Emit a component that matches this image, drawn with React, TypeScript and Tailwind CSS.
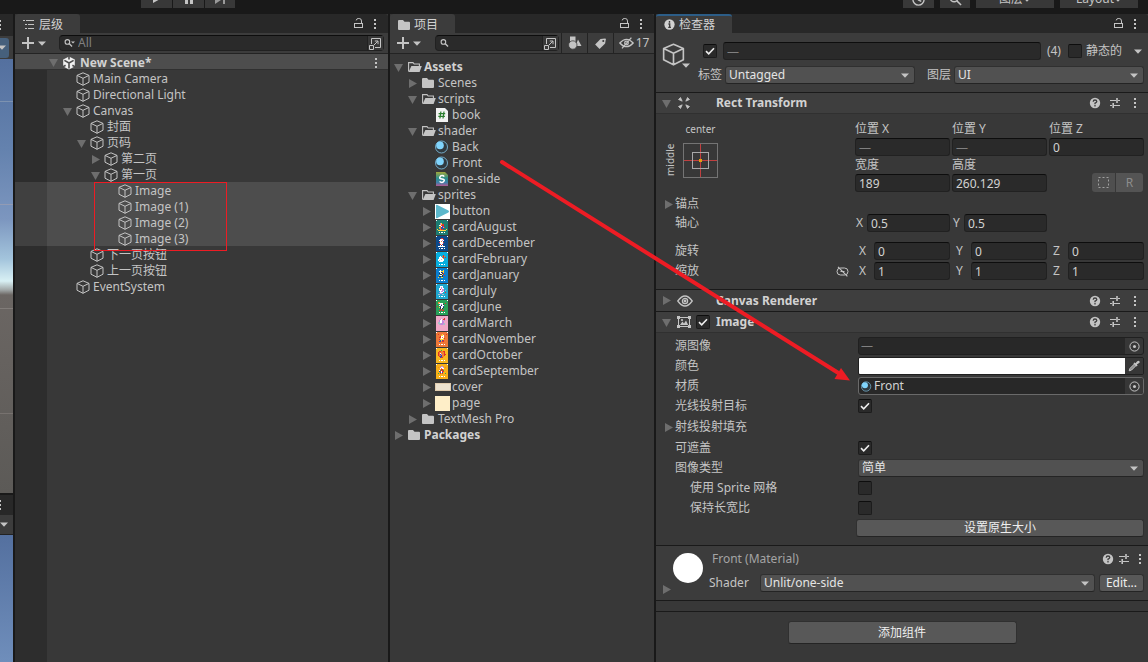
import React from 'react';
import { clsx } from 'clsx';

type IconProps = { className?: string };

const FIELD =
  'h-[18px] w-full min-w-0 rounded-[3px] border border-[#212121] border-t-[#0d0d0d] bg-[#2a2a2a] px-[3px] text-[#d2d2d2] outline-none placeholder:text-[#808080]';
const BUTTON =
  'flex items-center justify-center rounded-[3px] border border-[#303030] border-b-[#242424] bg-[#585858] text-[#eeeeee]';

/* ---------- icons ---------- */

const CubeIcon = ({ className = 'size-[14px]' }: IconProps) => (
  <svg viewBox="0 0 14 14" className={clsx('shrink-0', className)} fill="none" stroke="#c4c4c4" strokeLinejoin="round">
    <path d="M7 .8 13 3.4V10.2L7 13.3 1 10.2V3.4Z M1 3.4 7 6.3 13 3.4 M7 6.3V13.3" />
  </svg>
);

const UnityIcon = () => (
  <svg viewBox="0 0 14 14" className="size-[14px] shrink-0">
    <path d="M7 .5 12.8 3.6V10.4L7 13.6 1.2 10.4V3.6Z" fill="#f0f0f0" />
    <path d="M7 7V12.4M7 7 2.4 4.4M7 7 11.6 4.4M7 0V3.4M0 11.4 3.6 9.2M14 11.4 10.4 9.2" stroke="#4d4d4d" strokeWidth="1.6" fill="none" />
  </svg>
);

const Foldout = ({ open }: { open?: boolean }) => (
  <svg viewBox="0 0 9 9" className="size-[9px] shrink-0" fill="#6e6e6e">
    {open ? <path d="M0 1H9L4.5 9Z" /> : <path d="M1 0V9L9 4.5Z" />}
  </svg>
);

const Caret = ({ className }: IconProps) => (
  <svg viewBox="0 0 8 5" className={clsx('h-[5px] w-[8px] shrink-0', className)} fill="#c4c4c4">
    <path d="M0 .5H8L4 4.8Z" />
  </svg>
);

const LockIcon = () => (
  <svg viewBox="0 0 10 12" className="h-[12px] w-[10px]" fill="none" stroke="#c4c4c4">
    <rect x="1.5" y="5.5" width="8" height="4" />
    <path d="M8.5 5.5V3Q8.5 .5 6.2 .5H5.2Q3.6 .5 3.2 2.4" />
  </svg>
);

const DotsIcon = () => (
  <svg viewBox="0 0 4 12" className="h-[12px] w-[4px] shrink-0" fill="#c4c4c4">
    <path d="M1 1h2v2H1zM1 5h2v2H1zM1 9h2v2H1z" />
  </svg>
);

const HelpIcon = () => (
  <svg viewBox="0 0 12 12" className="size-[12px]">
    <circle cx="6" cy="6" r="5.2" fill="#c4c4c4" />
    <path d="M4.2 4.7Q4.3 3 6 3T7.8 4.6Q7.8 5.5 6 6.2V7.2M6 8V9.4" stroke="#3e3e3e" strokeWidth="1.3" fill="none" />
  </svg>
);

const PresetIcon = () => (
  <svg viewBox="0 0 12 12" className="size-[12px]" stroke="#c4c4c4" fill="none">
    <path d="M1 3.5H7M9 3.5H11M1 8.5H3M5 8.5H11" strokeWidth="1.2" />
    <path d="M8 1V6M4.2 6V11" strokeWidth="1.6" />
  </svg>
);

const SearchIcon = ({ caret }: { caret?: boolean }) => (
  <svg viewBox="0 0 12 10" className="h-[10px] w-[12px] shrink-0" fill="none" stroke="#c4c4c4">
    <circle cx="3.4" cy="3.9" r="2.3" strokeWidth="1.1" />
    <path d="M5.1 5.6 8 8.4" strokeWidth="1.4" />
    {caret && <path d="M7 3.4H11L9 5.6Z" fill="#c4c4c4" stroke="none" />}
  </svg>
);

const PopoutIcon = () => (
  <svg viewBox="0 0 13 13" className="size-[13px]" fill="none" stroke="#c4c4c4">
    <path d="M2.5 7V1.5H11.5V10.5H6M.5 8.5H4.5V12.5H.5ZM5 8 8.8 4.2M5.8 4H9V7.2" />
  </svg>
);

const PlusIcon = () => (
  <svg viewBox="0 0 12 12" className="size-[12px]" stroke="#c4c4c4" strokeWidth="2">
    <path d="M6 0V12M0 6H12" />
  </svg>
);

const FolderIcon = ({ open }: { open?: boolean }) => (
  <svg viewBox="0 0 14 12" className="h-[12px] w-[14px] shrink-0">
    {open ? (
      <>
        <path d="M.6 10.5V1.6H5L6.2 3H11.4V5" fill="none" stroke="#c4c4c4" strokeWidth="1.1" />
        <path d="M3.4 5H13.8L11.6 11H.6Z" fill="#c4c4c4" />
      </>
    ) : (
      <path d="M0 2Q0 1 1 1H5L6.5 2.8H11Q12 2.8 12 3.8V10Q12 11 11 11H1Q0 11 0 10Z" fill="#c4c4c4" />
    )}
  </svg>
);

const MaterialIcon = ({ className = 'size-[14px]' }: IconProps) => (
  <svg viewBox="0 0 14 14" className={clsx('shrink-0', className)}>
    <circle cx="6.5" cy="7" r="6" fill="#303a40" stroke="#7ab8d8" strokeWidth=".9" />
    <circle cx="5" cy="5.4" r="3.8" fill="#80d4fc" />
  </svg>
);

const ScriptIcon = () => (
  <svg viewBox="0 0 14 14" className="size-[14px] shrink-0">
    <path d="M1 0H10L13 3V14H1Z" fill="#f2f2f2" />
    <path d="M5.9 3.5 4.9 10.5M9 3.5 8 10.5M3.6 5.6H10.2M3.3 8.4H9.9" stroke="#2a7d2e" strokeWidth="1.2" />
  </svg>
);

const ShaderIcon = () => (
  <svg viewBox="0 0 14 14" className="size-[14px] shrink-0">
    <defs>
      <linearGradient id="shader-fill" x1="0" y1="0" x2="0" y2="1">
        <stop offset="0" stopColor="#a3a83c" />
        <stop offset=".45" stopColor="#2a8f8c" />
        <stop offset=".75" stopColor="#3f7fa8" />
        <stop offset="1" stopColor="#b3588f" />
      </linearGradient>
    </defs>
    <path d="M1 0H10L13 3V14H1Z" fill="url(#shader-fill)" />
    <path d="M9.2 4.6Q8.6 3.6 7 3.6T4.8 5.2 7 7 9.2 8.8 7 10.4 4.6 9.4" stroke="#fff" strokeWidth="1.5" fill="none" />
  </svg>
);

const PALETTE: Record<string, string> = {
  w: '#ffffff', r: '#e0302a', y: '#ffd23c', b: '#2a4fb8', p: '#c488dc', o: '#f08030', g: '#34a853', k: '#26324a', s: '#a8c0c8',
};

const CARDS: Record<string, { bg: string; art: string[] }> = {
  August: { bg: '#1d7d72', art: ['w..........w', '............', '............', '....py......', '....pyrr....', '...wwrrr....', '....owbr....', '...yobbpr...', '...oobb.....', '.y..orr...y.', '..yyyyyyyy..', '............', '...w.ww.w...'] },
  December: { bg: '#0c4a8c', art: ['w..........w', '............', '.....rr.....', '....wwwr....', '...wwwpw....', '....wow.....', '...rwwwr....', '...bwwwb....', '....rwr.....', '....w.w.....', '..wwwwwww...', '............', '...w.ww.w...'] },
  February: { bg: '#08b0e0', art: ['w..........w', '............', '............', '.......r....', '....w.oro...', '...www.r.r..', '...wwwwo....', '..wwwsww....', '..wswwww....', '...wwww.....', '............', '............', '...w.ww.w...'] },
  January: { bg: '#0a7fd0', art: ['w..........w', '............', '....w..y....', '...wwyyy....', '....wkby....', '...kwwkr....', '....kkyb....', '...ywwk.r...', '...kk.k.....', '..y..yy.....', '............', '............', '...w.ww.w...'] },
  July: { bg: '#20a8d0', art: ['w..........w', '............', '....www.....', '....wpw.....', '...wwpww....', '...wrwpp....', '...wwwpp.s..', '....wppw....', '...pwww..r..', '....pp......', '..ss..ss....', '............', '...w.ww.w...'] },
  June: { bg: '#28a058', art: ['w..........w', '............', '..oo........', '..owwww..r..', '....wpwk....', '...wwkww....', '.r..bwwb....', '...ykwwk....', '....kwk.....', '....r.r.....', '...rr.rr....', '............', '...w.ww.w...'] },
  March: { bg: '#f0a8c8', art: ['............', '............', '........r...', '....pw.rr...', '...pwwp.p...', '...pwwpp....', '..sswwpp....', '..sssppps...', '...spppss...', '............', '............', '............', '............'] },
  November: { bg: '#ee7838', art: ['w..........w', '............', '..r...y...r.', '.....yyw....', '....rwww....', '...rrwow....', '....ywwyr...', '...ryyyy....', '....bybr....', '...bb.rr....', '............', '............', '...w.ww.w...'] },
  October: { bg: '#f8b820', art: ['w..........w', '............', '.....g......', '...rroorr...', '..rooooor...', '..rowooor...', '..robpoorr..', '..rooboor...', '...rbboo....', '....brr.....', '............', '............', '...w.ww.w...'] },
  September: { bg: '#f8b018', art: ['w..........w', '............', '.....pp.....', '..o.pwwp.o..', '....woww....', '.....rr.....', '...wgrrg....', '...brwrr....', '....bwb.....', '..g.r.r..g..', '............', '............', '...w.ww.w...'] },
};

const CardIcon = ({ month }: { month: string }) => {
  const { bg, art } = CARDS[month];
  return (
    <svg viewBox="0 0 12 15" className="ml-px h-[15px] w-[12px] shrink-0" shapeRendering="crispEdges">
      <rect width="12" height="15" fill={bg} />
      {art.flatMap((line, y) =>
        line.split('').map((c, x) => c !== '.' && <rect key={`${x}-${y}`} x={x} y={y} width="1" height="1" fill={PALETTE[c]} />)
      )}
    </svg>
  );
};

/* ---------- shared controls ---------- */

const Check = ({ id, label, checked }: { id: string; label?: string; checked?: boolean }) => (
  <span className="relative flex size-[14px] shrink-0">
    <input
      id={id}
      type="checkbox"
      aria-label={label}
      defaultChecked={checked}
      className="peer size-[14px] appearance-none rounded-[2px] border border-[#1c1c1c] border-t-[#0d0d0d] bg-[#2a2a2a]"
    />
    <svg viewBox="0 0 14 14" className="pointer-events-none absolute inset-0 hidden size-[14px] peer-checked:block" fill="none" stroke="#eeeeee" strokeWidth="1.6">
      <path d="M3 7.2 5.7 9.8 11 4.2" />
    </svg>
  </span>
);

const Dropdown = ({ id, value, label, className }: { id: string; value: string; label?: string; className?: string }) => (
  <span className={clsx('relative flex min-w-0', className)}>
    <select
      id={id}
      aria-label={label}
      className="h-[18px] w-full appearance-none rounded-[3px] border border-[#303030] border-b-[#242424] bg-[#515151] pl-[3px] leading-4 text-[#e4e4e4] outline-none"
    >
      <option>{value}</option>
    </select>
    <Caret className="pointer-events-none absolute top-[7px] right-[6px]" />
  </span>
);

const PanelTabs = ({ icon, title, active }: { icon: React.ReactNode; title: string; active?: boolean }) => (
  <div className="flex h-[19px] items-stretch justify-between rounded-t-[3px] bg-[#282828]">
    <button
      className={clsx(
        'flex items-center gap-[4px] rounded-t-[3px] border-t-2 bg-[#3c3c3c] pr-[17px] pl-2 text-[#d2d2d2]',
        active ? 'border-[#2c5d87]' : 'border-[#3c3c3c]'
      )}
    >
      {icon}
      {title}
    </button>
    <div className="flex items-center gap-[10px] pr-[11px]">
      <button aria-label="Lock"><LockIcon /></button>
      <button aria-label="Menu"><DotsIcon /></button>
    </div>
  </div>
);

const AddButton = () => (
  <button aria-label="Add" className="flex w-[37px] shrink-0 items-center gap-[4px]">
    <PlusIcon />
    <Caret />
  </button>
);

/* ---------- scene view edge ---------- */

const SceneEdge = () => (
  <div className="flex flex-col overflow-hidden bg-[#282828]">
    <div className="flex h-[22px] items-center"><span className="-ml-[2px] flex"><DotsIcon /></span></div>
    <div className="flex h-[23px] items-center bg-[#3c3c3c]">
      <button aria-label="Gizmos" className="flex h-[20px] w-[9px] items-center rounded-r-[3px] bg-[#46607c]"><Caret className="-ml-[2px]" /></button>
    </div>
    <div className="h-[434px] bg-[linear-gradient(#54709f_0px,#6482ae_90px,#7c96bf_160px,#a3c4dc_200px,#d8f0f4_222px,#a0a6a6_231px,#6b6663_236px,#5c5a57_434px)]">
      <div className="h-[43px] border-b border-[#7d92b0]" />
      <div className="h-[103px] border-b border-[#929bb4]" />
      <div className="h-[104px] border-b border-[#817c79]" />
      <div className="h-[105px] border-b border-[#77726f]" />
    </div>
    <div className="flex h-[22px] items-center border-t-2 border-[#191919]"><span className="-ml-[2px] flex"><DotsIcon /></span></div>
    <div className="flex h-[20px] items-center border-b border-[#222222] bg-[#3c3c3c]"><Caret /></div>
    <div className="flex-1 bg-[linear-gradient(#54709f,#6f8ebb)]" />
  </div>
);

/* ---------- hierarchy ---------- */

interface TreeItem {
  name: string;
  depth: number;
  open?: boolean;
  selected?: boolean;
}

const OBJECTS: TreeItem[] = [
  { name: 'Main Camera', depth: 1 },
  { name: 'Directional Light', depth: 1 },
  { name: 'Canvas', depth: 1, open: true },
  { name: '封面', depth: 2 },
  { name: '页码', depth: 2, open: true },
  { name: '第二页', depth: 3, open: false },
  { name: '第一页', depth: 3, open: true },
  { name: 'Image', depth: 4, selected: true },
  { name: 'Image (1)', depth: 4, selected: true },
  { name: 'Image (2)', depth: 4, selected: true },
  { name: 'Image (3)', depth: 4, selected: true },
  { name: '下一页按钮', depth: 2 },
  { name: '上一页按钮', depth: 2 },
  { name: 'EventSystem', depth: 1 },
];

const OBJECT_INDENT = ['pl-[2px]', 'pl-[16px]', 'pl-[30px]', 'pl-[44px]', 'pl-[58px]'];

const Hierarchy = () => (
  <section className="flex flex-col bg-[#383838]">
    <PanelTabs
      title="层级"
      icon={
        <svg viewBox="0 0 12 12" className="size-[12px]" stroke="#c4c4c4">
          <path d="M0 1.5H2M3 1.5H11M2 5.5H4M5 5.5H11M2 9.5H4M5 9.5H11" />
        </svg>
      }
    />
    <div className="flex h-[21px] items-center border-b border-[#232323] bg-[#3c3c3c] pr-[4px] pl-[7px]">
      <AddButton />
      <div className="flex h-[16px] min-w-0 flex-1 items-center rounded-[4px] border border-[#212121] border-t-[#0d0d0d] bg-[#2a2a2a] pl-[4px]">
        <SearchIcon caret />
        <input aria-label="Search" placeholder="All" className="min-w-0 flex-1 bg-transparent pl-[2px] outline-none placeholder:text-[#808080]" />
        <button aria-label="Open search" className="flex h-full items-center border-l border-[#212121] bg-[#383838] px-px"><PopoutIcon /></button>
      </div>
    </div>
    <div className="flex h-[16px] items-center border-b border-[#303030] bg-[#4d4d4d] pt-[2px] pr-[10px] pl-[34px] font-bold text-[#d2d2d2]">
      <span className="flex w-[13px]"><Foldout open /></span>
      <UnityIcon />
      <span className="flex-1 pl-[4px]">New Scene*</span>
      <button aria-label="Scene menu"><DotsIcon /></button>
    </div>
    <ul className="flex-1 bg-[linear-gradient(90deg,#2d2d2d_32px,#383838_32px)]">
      {OBJECTS.map((o) => (
        <li
          key={o.name}
          className={clsx('flex h-[16px] items-center pt-[2px] pl-[32px]', o.selected && 'bg-[linear-gradient(90deg,#404040_32px,#4d4d4d_32px)]')}
        >
          <div className={clsx('flex items-center', OBJECT_INDENT[o.depth])}>
            <span className="flex w-[13px]">{o.open !== undefined && <Foldout open={o.open} />}</span>
            <CubeIcon />
            <span className="pl-[3px] whitespace-nowrap">{o.name}</span>
          </div>
        </li>
      ))}
    </ul>
  </section>
);

/* ---------- project ---------- */

interface AssetItem extends TreeItem {
  icon?: React.ReactNode;
}

const card = (month: string): AssetItem => ({ name: `card${month}`, depth: 2, open: false, icon: <CardIcon month={month} /> });

const ASSETS: AssetItem[] = [
  { name: 'Assets', depth: 0, open: true },
  { name: 'Scenes', depth: 1, open: false },
  { name: 'scripts', depth: 1, open: true },
  { name: 'book', depth: 2, icon: <ScriptIcon /> },
  { name: 'shader', depth: 1, open: true },
  { name: 'Back', depth: 2, icon: <MaterialIcon /> },
  { name: 'Front', depth: 2, icon: <MaterialIcon /> },
  { name: 'one-side', depth: 2, icon: <ShaderIcon /> },
  { name: 'sprites', depth: 1, open: true },
  {
    name: 'button',
    depth: 2,
    open: false,
    icon: (
      <svg viewBox="0 0 15 15" className="size-[15px] shrink-0">
        <rect width="15" height="15" fill="#fff" />
        <path d="M1 1.5Q1 .2 2.4 1L13.4 6.4Q14.8 7.5 13.4 8.6L2.4 14Q1 14.8 1 13.5Z" fill="#5cb8cc" />
      </svg>
    ),
  },
  card('August'),
  card('December'),
  card('February'),
  card('January'),
  card('July'),
  card('June'),
  card('March'),
  card('November'),
  card('October'),
  card('September'),
  { name: 'cover', depth: 2, open: false, icon: <span className="h-[8px] w-[16px] shrink-0 border border-[#e0ccae] bg-[#ece2cf]" /> },
  { name: 'page', depth: 2, open: false, icon: <span className="size-[15px] shrink-0 bg-[#feeec8]" /> },
  { name: 'TextMesh Pro', depth: 1, open: false },
  { name: 'Packages', depth: 0, open: false },
];

const ASSET_INDENT = ['pl-[4px]', 'pl-[18px]', 'pl-[32px]'];

const Project = () => (
  <section className="flex flex-col bg-[#383838]">
    <PanelTabs title="项目" icon={<span className="flex w-[12px]"><FolderIcon /></span>} />
    <div className="flex h-[21px] items-center border-b border-[#232323] bg-[#3c3c3c] pl-[7px]">
      <AddButton />
      <div className="ml-px flex h-[16px] min-w-0 flex-1 items-center rounded-[4px] border border-[#212121] border-t-[#0d0d0d] bg-[#2a2a2a] pl-[4px]">
        <SearchIcon />
        <input aria-label="Search assets" className="min-w-0 flex-1 bg-transparent outline-none" />
        <button aria-label="Open search" className="flex h-full items-center border-l border-[#212121] bg-[#383838] px-px"><PopoutIcon /></button>
      </div>
      <button aria-label="Filter by type" className="ml-[2px] flex h-full w-[26px] items-center justify-center border-l border-[#232323]">
        <svg viewBox="0 0 14 14" className="size-[14px]" fill="#c4c4c4">
          <path d="M2 .5H7.5V6H2ZM10 3.5 13.5 10H7.5Z" />
          <circle cx="4.8" cy="9" r="4.2" stroke="#3c3c3c" strokeWidth=".8" />
        </svg>
      </button>
      <button aria-label="Filter by label" className="flex h-full w-[26px] items-center justify-center border-l border-[#232323]">
        <svg viewBox="0 0 14 14" className="size-[13px]">
          <path d="M7 2.2 12 1.6Q12.8 1.6 12.7 2.4L12 7 6 13 1.2 8.2Z" fill="#c4c4c4" />
          <circle cx="10" cy="4.2" r="1.1" fill="#3c3c3c" />
        </svg>
      </button>
      <button className="flex h-full w-[41px] items-center justify-center gap-[2px] border-l border-[#232323]">
        <svg viewBox="0 0 15 12" className="h-[12px] w-[15px]" fill="none" stroke="#c4c4c4" strokeWidth="1.3">
          <path d="M.8 6Q7.5-1.4 14.2 6 7.5 13.4.8 6ZM12.4.6 3 11.4" />
          <circle cx="7.5" cy="6" r="1.8" />
        </svg>
        17
      </button>
    </div>
    <ul className="flex-1 pt-[4px]">
      {ASSETS.map((a) => (
        <li key={a.name} className={clsx('flex h-[16px] items-center pt-[2px]', ASSET_INDENT[a.depth], a.depth === 0 && 'font-bold text-[#d2d2d2]')}>
          <span className={clsx('flex', a.icon ? 'w-[13px]' : 'w-[14px]')}>{a.open !== undefined && <Foldout open={a.open} />}</span>
          <span className={clsx('flex shrink-0 items-center', a.icon ? 'w-[17px]' : 'w-[16px]')}>
            {a.icon ?? <FolderIcon open={a.open} />}
          </span>
          {a.name}
        </li>
      ))}
    </ul>
  </section>
);

/* ---------- inspector ---------- */

const HeaderTools = ({ compact }: { compact?: boolean }) => (
  <div className={clsx('flex items-center', compact ? 'gap-1' : 'gap-2')}>
    <button aria-label="Help"><HelpIcon /></button>
    <button aria-label="Presets"><PresetIcon /></button>
    <button aria-label="Component menu" className="flex w-[12px] justify-center"><DotsIcon /></button>
  </div>
);

interface ComponentHeaderProps {
  title: string;
  icon: React.ReactNode;
  open?: boolean;
  toggle?: React.ReactNode;
}

const ComponentHeader = ({ title, icon, open, toggle }: ComponentHeaderProps) => (
  <div className={clsx('flex h-[22px] items-center border-t border-[#1a1a1a] bg-[#3e3e3e] pr-[7px] pl-[6px]', open && 'border-b border-b-[#303030]')}>
    <Foldout open={open} />
    <span className="flex w-[45px] items-center gap-[5px] pl-[6px]">
      {icon}
      {toggle}
    </span>
    <h2 className="flex-1 font-bold text-[#d2d2d2]">{title}</h2>
    <HeaderTools />
  </div>
);

const Axis = ({ id, axis, value, wide }: { id: string; axis: string; value: string; wide?: boolean }) => (
  <div className="flex items-center">
    <label htmlFor={id} className={clsx('shrink-0', wide ? 'w-[19px] pl-[4px]' : 'w-[12px] pl-px')}>{axis}</label>
    <input id={id} defaultValue={value} className={FIELD} />
  </div>
);

const Stacked = ({ id, label, value }: { id: string; label: string; value?: string }) => (
  <div className="flex flex-col">
    <label htmlFor={id} className="h-[18px] leading-[18px]">{label}</label>
    <input id={id} defaultValue={value} placeholder="—" className={FIELD} />
  </div>
);

const AXIS_GRID = 'grid grid-cols-[197px_1fr_1fr_1fr] items-center gap-x-[2px] pr-[4px]';

const RectTransform = () => (
  <div className="h-[175px] pt-[6px]">
    <div className="grid grid-cols-[197px_1fr_1fr_1fr] gap-x-[2px] pr-[4px]">
      <div className="row-span-2 grid w-[62px] grid-cols-[27px_35px] content-start text-[10px]">
        <span className="col-start-2 h-[22px] text-center leading-[18px]">center</span>
        <span className="col-start-1 h-[36px] rotate-180 justify-self-center text-center leading-[14px] [writing-mode:vertical-rl]">middle</span>
        <button aria-label="Anchor presets">
          <svg viewBox="0 0 35 35" className="size-[35px]" fill="none" shapeRendering="crispEdges">
            <rect x=".5" y=".5" width="34" height="34" stroke="#747474" />
            <path d="M17.5 1V34M1 17.5H34" stroke="#c04040" />
            <rect x="9.5" y="9.5" width="16" height="16" stroke="#a8a8a8" />
            <rect x="16" y="16" width="3" height="3" fill="#e0a010" />
          </svg>
        </button>
      </div>
      <Stacked id="pos-x" label="位置 X" />
      <Stacked id="pos-y" label="位置 Y" />
      <Stacked id="pos-z" label="位置 Z" value="0" />
      <Stacked id="width" label="宽度" value="189" />
      <Stacked id="height" label="高度" value="260.129" />
      <div className="flex items-end justify-end pr-px">
        <button aria-label="Blueprint mode" className="flex h-[19px] w-[23px] items-center justify-center rounded-l-[3px] bg-[#4f4f4f]">
          <svg viewBox="0 0 11 11" className="size-[11px]" fill="none" stroke="#a0a0a0" strokeDasharray="2 2">
            <rect x=".5" y=".5" width="10" height="10" />
          </svg>
        </button>
        <button aria-label="Raw edit mode" className="ml-px h-[19px] w-[27px] rounded-r-[3px] bg-[#545454] text-[#8c8c8c]">R</button>
      </div>
    </div>
    <div className="mt-[3px] flex h-[18px] items-center pl-[8px]">
      <span className="flex w-[11px]"><Foldout /></span>
      锚点
    </div>
    <div className={clsx(AXIS_GRID, 'mt-px')}>
      <span className="pl-[19px]">轴心</span>
      <Axis id="pivot-x" axis="X" value="0.5" />
      <Axis id="pivot-y" axis="Y" value="0.5" />
    </div>
    <div className={clsx(AXIS_GRID, 'mt-[10px]')}>
      <span className="pl-[19px]">旋转</span>
      <Axis id="rot-x" axis="X" value="0" wide />
      <Axis id="rot-y" axis="Y" value="0" wide />
      <Axis id="rot-z" axis="Z" value="0" wide />
    </div>
    <div className={clsx(AXIS_GRID, 'mt-[2px]')}>
      <span className="flex items-center justify-between pr-[4px] pl-[19px]">
        缩放
        <svg viewBox="0 0 13 11" className="h-[11px] w-[13px]" fill="none" stroke="#c4c4c4">
          <rect x="1" y="2" width="11" height="7" rx="3.5" />
          <path d="M4.5 5.5H8.5M2 .8 11.4 10.4" strokeWidth="1.2" />
        </svg>
      </span>
      <Axis id="scale-x" axis="X" value="1" wide />
      <Axis id="scale-y" axis="Y" value="1" wide />
      <Axis id="scale-z" axis="Z" value="1" wide />
    </div>
  </div>
);

interface PropertyProps {
  id?: string;
  label: string;
  foldout?: boolean;
  nested?: boolean;
  children?: React.ReactNode;
}

const Property = ({ id, label, foldout, nested, children }: PropertyProps) => (
  <div className={clsx('flex items-center pr-[4px] pl-[8px]', foldout ? 'h-[22px]' : 'h-[20px]')}>
    <span className="flex w-[11px] shrink-0">{foldout && <Foldout />}</span>
    <label htmlFor={id} className={clsx('w-[183px] shrink-0', nested && 'pl-[15px]')}>{label}</label>
    {children}
  </div>
);

const ObjectField = ({ id, value, icon, focused }: { id: string; value: string; icon?: React.ReactNode; focused?: boolean }) => (
  <div className={clsx('flex h-[18px] min-w-0 flex-1 items-center overflow-hidden rounded-[3px] border bg-[#282828]', focused ? 'border-[#6a6a6a]' : 'border-[#202020]')}>
    {icon}
    <input id={id} readOnly value={value} className={clsx('min-w-0 flex-1 bg-transparent pl-[2px] outline-none', focused ? 'text-[#d2d2d2]' : 'text-[#808080]')} />
    <button aria-label="Pick object" className="flex h-full w-[18px] items-center justify-center bg-[#373737]">
      <svg viewBox="0 0 11 11" className="size-[11px]" fill="none" stroke="#c4c4c4">
        <circle cx="5.5" cy="5.5" r="4.6" />
        <circle cx="5.5" cy="5.5" r="1.5" fill="#c4c4c4" stroke="none" />
      </svg>
    </button>
  </div>
);

const ImageComponent = () => (
  <div className="pt-[3px] pb-[8px]">
    <Property id="source-image" label="源图像">
      <ObjectField id="source-image" value="—" />
    </Property>
    <Property id="color" label="颜色">
      <div className="flex h-[18px] min-w-0 flex-1 items-stretch overflow-hidden rounded-[2px] border border-[#202020]">
        <button id="color" aria-label="Color" className="flex-1 bg-white" />
        <button aria-label="Pick color" className="flex w-[18px] items-center justify-center bg-[#373737]">
          <svg viewBox="0 0 12 12" className="size-[12px]">
            <path d="M1.2 10.8 2 8.4 6.4 4 8 5.6 3.6 10Z" fill="#8c8c8c" stroke="#c4c4c4" />
            <path d="M5.4 3.2 6.6 2.4 7.5 3.3 9 1.4Q10.5.2 11.4 1.2T10.8 3.2L8.8 4.6 9.6 5.6 8.6 6.6Z" fill="#c4c4c4" />
          </svg>
        </button>
      </div>
    </Property>
    <Property id="material" label="材质">
      <ObjectField id="material" value="Front" focused icon={<MaterialIcon className="ml-[2px] size-[11px]" />} />
    </Property>
    <Property id="raycast" label="光线投射目标"><Check id="raycast" checked /></Property>
    <Property label="射线投射填充" foldout />
    <Property id="maskable" label="可遮盖"><Check id="maskable" checked /></Property>
    <Property id="image-type" label="图像类型"><Dropdown id="image-type" value="简单" className="flex-1" /></Property>
    <Property id="sprite-mesh" label="使用 Sprite 网格" nested><Check id="sprite-mesh" /></Property>
    <Property id="aspect" label="保持长宽比" nested><Check id="aspect" /></Property>
    <div className="pt-px pr-[4px] pl-[200px]">
      <button className={clsx(BUTTON, 'h-[18px] w-full')}>设置原生大小</button>
    </div>
  </div>
);

const ObjectHeader = () => (
  <div className="flex h-[59px] bg-[#3c3c3c] pt-[9px] pr-[4px] pl-[6px]">
    <button aria-label="Object icon" className="flex h-[26px] w-[35px] shrink-0">
      <CubeIcon className="mt-px size-[23px]" />
      <Caret className="-ml-[3px] self-end" />
    </button>
    <div className="flex min-w-0 flex-1 flex-col gap-[6px]">
      <div className="flex h-[18px] items-center">
        <span className="pr-[6px] pl-[6px]"><Check id="active" label="Active" checked /></span>
        <input aria-label="Name" placeholder="—" className={FIELD} />
        <span className="shrink-0 pr-[7px] pl-[6px]">(4)</span>
        <Check id="static" />
        <label htmlFor="static" className="shrink-0 pr-[12px] pl-[4px]">静态的</label>
        <button aria-label="Static flags" className="pr-[2px]"><Caret /></button>
      </div>
      <div className="flex items-center">
        <label htmlFor="tag" className="shrink-0 pr-[3px] pl-px">标签</label>
        <Dropdown id="tag" value="Untagged" className="flex-1" />
        <label htmlFor="layer" className="shrink-0 pr-[3px] pl-[12px]">图层</label>
        <Dropdown id="layer" value="UI" className="flex-1" />
      </div>
    </div>
  </div>
);

const MaterialSection = () => (
  <div className="flex h-[56px] border-y border-[#1a1a1a] bg-[#3c3c3c]">
    <div className="flex w-[53px] shrink-0 items-end pb-[6px] pl-[6px]">
      <Foldout />
      <span className="mb-[11px] ml-[2px] size-[30px] rounded-full bg-white" />
    </div>
    <div className="flex min-w-0 flex-1 flex-col pt-[4px]">
      <div className="flex h-[18px] items-center justify-between pr-[2px] pl-[3px]">
        <h2 className="text-[#a4a4a4]">Front (Material)</h2>
        <HeaderTools compact />
      </div>
      <div className="mt-[6px] flex items-center pr-[4px]">
        <label htmlFor="shader" className="w-[51px] shrink-0">Shader</label>
        <Dropdown id="shader" value="Unlit/one-side" className="flex-1" />
        <button className={clsx(BUTTON, 'ml-[4px] h-[18px] w-[45px] shrink-0')}>Edit...</button>
      </div>
    </div>
  </div>
);

const Inspector = () => (
  <section className="flex flex-col bg-[#383838]">
    <PanelTabs
      title="检查器"
      active
      icon={
        <svg viewBox="0 0 12 12" className="size-[11px]">
          <circle cx="6" cy="6" r="5.6" fill="#d2d2d2" />
          <path d="M6 2.2V4M4.8 5.4H6.2V9M4.6 9.2H7.6" stroke="#3c3c3c" strokeWidth="1.5" fill="none" />
        </svg>
      }
    />
    <ObjectHeader />
    <ComponentHeader
      title="Rect Transform"
      open
      icon={
        <svg viewBox="0 0 14 14" className="size-[14px]" fill="#c4c4c4">
          <path d="M1.5 3.5 3.5 1.5 5.2 5.2ZM12.5 3.5 10.5 1.5 8.8 5.2ZM1.5 10.5 3.5 12.5 5.2 8.8ZM12.5 10.5 10.5 12.5 8.8 8.8Z" stroke="#c4c4c4" strokeWidth=".8" />
        </svg>
      }
    />
    <RectTransform />
    <ComponentHeader
      title="Canvas Renderer"
      icon={
        <svg viewBox="0 0 16 12" className="h-[12px] w-[16px]" fill="none" stroke="#c4c4c4" strokeWidth="1.3">
          <path d="M.8 6Q8-4 15.2 6 8 16 .8 6Z" />
          <circle cx="8" cy="6" r="2.6" />
          <circle cx="8" cy="6" r=".8" fill="#c4c4c4" />
        </svg>
      }
    />
    <ComponentHeader
      title="Image"
      open
      toggle={<Check id="image-enabled" label="Image enabled" checked />}
      icon={
        <svg viewBox="0 0 14 12" className="h-[12px] w-[14px]" fill="#c4c4c4">
          <rect x="1.5" y="1.5" width="11" height="9" fill="none" stroke="#c4c4c4" />
          <path d="M0 0H3V3H0ZM11 0H14V3H11ZM0 9H3V12H0ZM11 9H14V12H11ZM3 9 5.4 5.6 7 7.4 9 4.4 11.2 9Z" />
          <circle cx="5" cy="4" r="1.1" />
        </svg>
      }
    />
    <ImageComponent />
    <MaterialSection />
    <div className="h-[11px] border-b border-[#1a1a1a]" />
    <div className="flex justify-center py-[9px]">
      <button className={clsx(BUTTON, 'h-[23px] w-[229px]')}>添加组件</button>
    </div>
  </section>
);

/* ---------- shell ---------- */

const TOOL = 'flex h-[18px] shrink-0 items-center justify-center bg-[#383838]';

const TopBar = () => (
  <header className="flex h-[14px] items-end justify-between overflow-hidden pr-[10px] pb-[6px] pl-[141px]">
    <div className="flex gap-px">
      <button aria-label="Play" className={clsx(TOOL, 'w-[31px]')}>
        <svg viewBox="0 0 12 12" className="size-[12px]" fill="#c4c4c4"><path d="M2 0 11 5 2 10Z" /></svg>
      </button>
      <button aria-label="Pause" className={clsx(TOOL, 'w-[31px]')}>
        <svg viewBox="0 0 10 10" className="size-[10px]" fill="#c4c4c4"><path d="M1 0H4V10H1ZM6 0H9V10H6Z" /></svg>
      </button>
      <button aria-label="Step" className={clsx(TOOL, 'w-[30px]')}>
        <svg viewBox="0 0 12 10" className="h-[10px] w-[12px]" fill="#9a9a9a"><path d="M1 0 8.5 5 1 10ZM9 0H11V10H9Z" /></svg>
      </button>
    </div>
    <div className="flex gap-[6px]">
      <button aria-label="History" className={clsx(TOOL, 'w-[31px]')}>
        <svg viewBox="0 0 14 14" className="size-[13px]" fill="none" stroke="#c4c4c4" strokeWidth="1.5">
          <circle cx="7" cy="7" r="6" />
          <path d="M7 3V7.5L10 9" />
        </svg>
      </button>
      <button aria-label="Search" className={clsx(TOOL, 'w-[30px]')}>
        <svg viewBox="0 0 14 14" className="size-[13px]" fill="none" stroke="#c4c4c4" strokeWidth="1.6">
          <circle cx="5.5" cy="5.5" r="4" />
          <path d="M8.5 8.5 13 13" />
        </svg>
      </button>
      <button className={clsx(TOOL, 'w-[78px] justify-between px-[3px]')}>图层<Caret /></button>
      <button className={clsx(TOOL, 'w-[78px] justify-between px-[3px]')}>Layout<Caret /></button>
    </div>
  </header>
);

const Annotations = () => (
  <svg className="pointer-events-none absolute top-0 left-0 h-[662px] w-[1148px]" fill="none">
    <rect x="94.5" y="182.5" width="132" height="68" stroke="#ed1c24" />
    <path d="M502 162 840 374" stroke="#ed1c24" strokeWidth="4" strokeLinecap="round" />
    <path d="M850 380.5 841 368 834.5 379Z" fill="#ed1c24" />
  </svg>
);

export default function App() {
  return (
    <div className="relative flex min-h-screen flex-col overflow-hidden bg-[#191919] font-['Noto_Sans','Noto_Sans_CJK_SC',sans-serif] text-[12px] leading-4 text-[#c4c4c4]">
      <TopBar />
      <main className="grid flex-1 grid-cols-[13px_minmax(0,373fr)_minmax(0,264fr)_minmax(0,492fr)] gap-x-[2px]">
        <SceneEdge />
        <Hierarchy />
        <Project />
        <Inspector />
      </main>
      <Annotations />
    </div>
  );
}
